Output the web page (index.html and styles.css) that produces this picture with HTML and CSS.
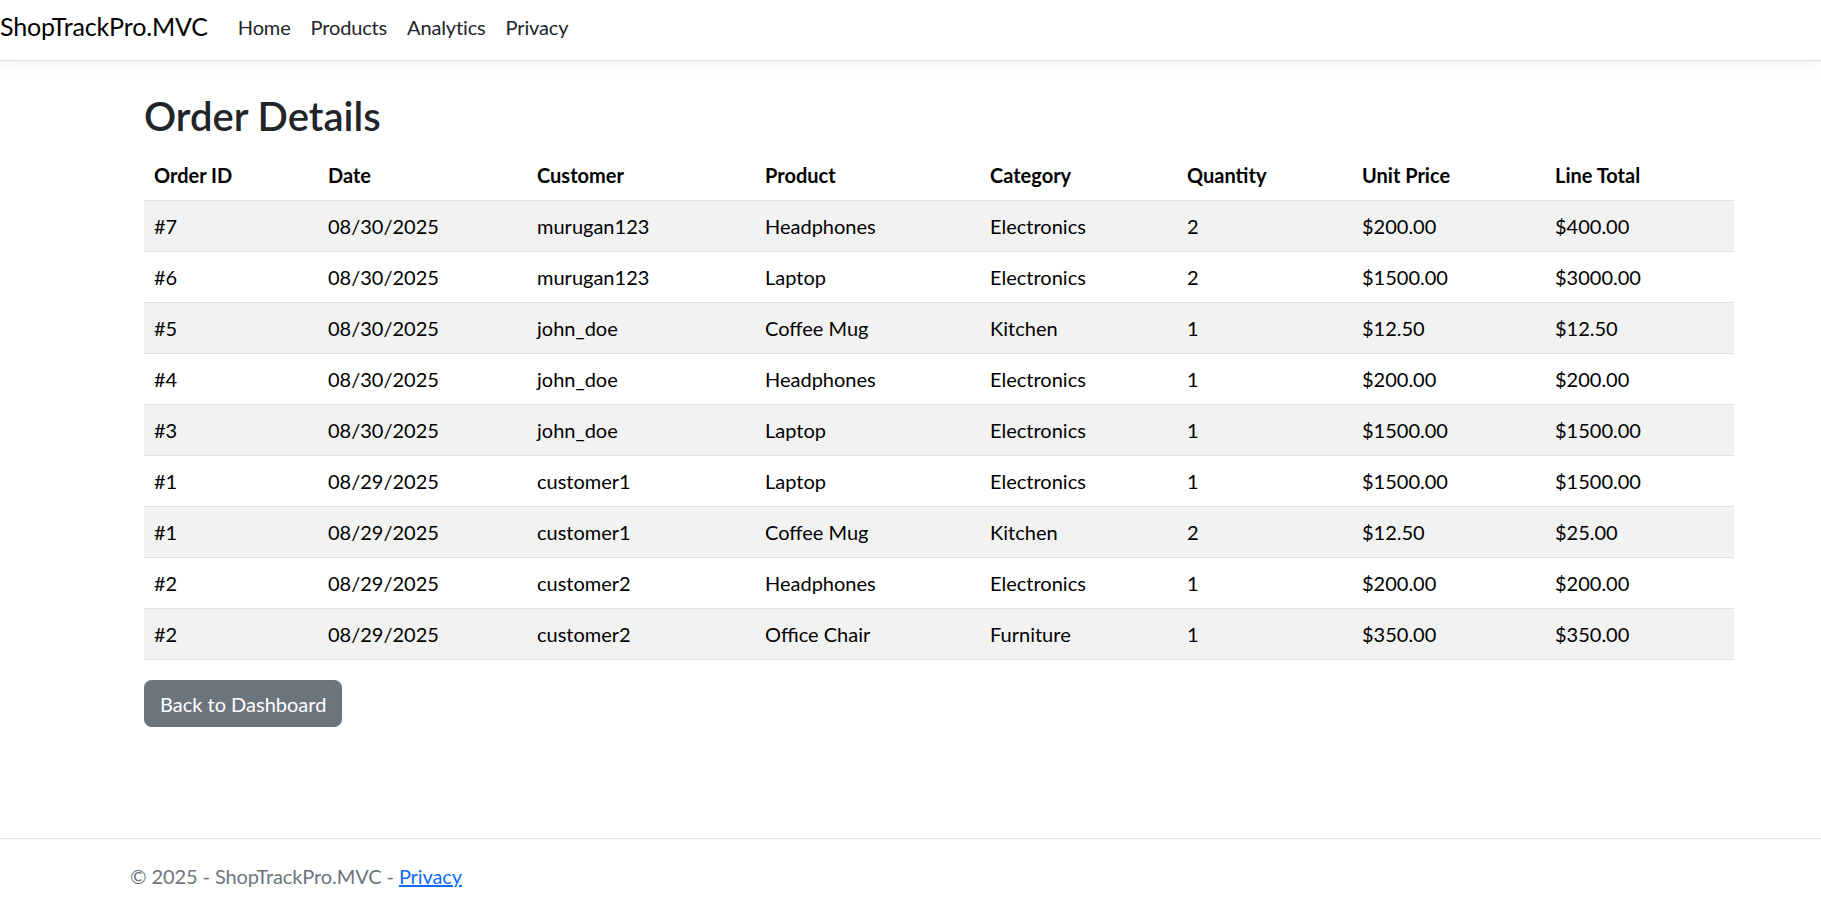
FILE: index.html
```html
<!DOCTYPE html>
<html lang="en">
<head>
<meta charset="utf-8">
<title>Order Details - ShopTrackPro.MVC</title>
<link rel="stylesheet" href="styles.css">
</head>
<body>
<div class="page">
  <header class="navbar">
    <a class="brand" href="#">ShopTrackPro.MVC</a>
    <nav class="nav">
      <a class="nav-link" href="#">Home</a>
      <a class="nav-link" href="#">Products</a>
      <a class="nav-link" href="#">Analytics</a>
      <a class="nav-link" href="#">Privacy</a>
    </nav>
  </header>

  <main class="main">
    <h2 class="title">Order Details</h2>
    <table class="table">
      <colgroup>
        <col class="c1"><col class="c2"><col class="c3"><col class="c4">
        <col class="c5"><col class="c6"><col class="c7"><col class="c8">
      </colgroup>
      <thead>
        <tr><th>Order ID</th><th>Date</th><th>Customer</th><th>Product</th><th>Category</th><th>Quantity</th><th>Unit Price</th><th>Line Total</th></tr>
      </thead>
      <tbody>
        <tr><td>#7</td><td>08/30/2025</td><td>murugan123</td><td>Headphones</td><td>Electronics</td><td>2</td><td>$200.00</td><td>$400.00</td></tr>
        <tr><td>#6</td><td>08/30/2025</td><td>murugan123</td><td>Laptop</td><td>Electronics</td><td>2</td><td>$1500.00</td><td>$3000.00</td></tr>
        <tr><td>#5</td><td>08/30/2025</td><td>john_doe</td><td>Coffee Mug</td><td>Kitchen</td><td>1</td><td>$12.50</td><td>$12.50</td></tr>
        <tr><td>#4</td><td>08/30/2025</td><td>john_doe</td><td>Headphones</td><td>Electronics</td><td>1</td><td>$200.00</td><td>$200.00</td></tr>
        <tr><td>#3</td><td>08/30/2025</td><td>john_doe</td><td>Laptop</td><td>Electronics</td><td>1</td><td>$1500.00</td><td>$1500.00</td></tr>
        <tr><td>#1</td><td>08/29/2025</td><td>customer1</td><td>Laptop</td><td>Electronics</td><td>1</td><td>$1500.00</td><td>$1500.00</td></tr>
        <tr><td>#1</td><td>08/29/2025</td><td>customer1</td><td>Coffee Mug</td><td>Kitchen</td><td>2</td><td>$12.50</td><td>$25.00</td></tr>
        <tr><td>#2</td><td>08/29/2025</td><td>customer2</td><td>Headphones</td><td>Electronics</td><td>1</td><td>$200.00</td><td>$200.00</td></tr>
        <tr><td>#2</td><td>08/29/2025</td><td>customer2</td><td>Office Chair</td><td>Furniture</td><td>1</td><td>$350.00</td><td>$350.00</td></tr>
      </tbody>
    </table>
    <a class="btn" href="#">Back to Dashboard</a>
  </main>

  <footer class="footer">
    <span>&copy; 2025 - ShopTrackPro.MVC - <a class="footer-link" href="#">Privacy</a></span>
  </footer>
</div>
</body>
</html>
```

FILE: styles.css
```css
* { box-sizing: border-box; }

html, body {
  margin: 0;
  padding: 0;
}

body {
  font-family: Lato, "Noto Sans", sans-serif;
  font-size: 20px;
  line-height: 1.5;
  color: #212529;
  background: #fff;
}

.page {
  min-height: 914px;
  display: flex;
  flex-direction: column;
}

.navbar {
  height: 61px;
  display: flex;
  align-items: center;
  border-bottom: 1px solid #dee2e6;
  box-shadow: 0 5px 15px rgba(0, 0, 0, 0.05);
  background: #fff;
  padding-bottom: 6px;
  letter-spacing: -0.15px;
}

.brand {
  font-size: 25px;
  color: #000;
  text-decoration: none;
  margin-right: 20px;
  line-height: 1.5;
}

.nav {
  display: flex;
}

.nav-link {
  color: #212529;
  text-decoration: none;
  padding: 0 10px;
}

.main {
  padding: 31px 87px 0 144px;
}

.title {
  font-size: 40px;
  font-weight: 600;
  line-height: 1.2;
  margin: 0 0 10px;
  color: #212529;
}

.table {
  width: 100%;
  border-collapse: collapse;
  table-layout: fixed;
  margin-bottom: 20px;
  color: #000;
}

.c1 { width: 174px; }
.c2 { width: 209px; }
.c3 { width: 228px; }
.c4 { width: 225px; }
.c5 { width: 197px; }
.c6 { width: 175px; }
.c7 { width: 193px; }
.c8 { width: 189px; }

.table th,
.table td {
  text-align: left;
  padding: 10px;
  line-height: 30px;
  border-bottom: 1px solid #dee2e6;
  vertical-align: top;
  white-space: nowrap;
}

.table th {
  font-weight: 700;
}

.table tbody tr:nth-child(odd) td {
  background: #f2f2f2;
}

.btn {
  display: inline-block;
  background: #6c757d;
  color: #fff;
  text-decoration: none;
  border: 1px solid #6c757d;
  border-radius: 7.5px;
  padding: 7.5px 15px;
  line-height: 30px;
  font-size: 20px;
}

.footer {
  margin-top: auto;
  border-top: 1px solid #dee2e6;
  height: 76px;
  line-height: 75px;
  padding-left: 130px;
  color: #6c757d;
  white-space: nowrap;
  letter-spacing: -0.1px;
}

.footer-link {
  color: #0d6efd;
  text-decoration: underline;
}
```
